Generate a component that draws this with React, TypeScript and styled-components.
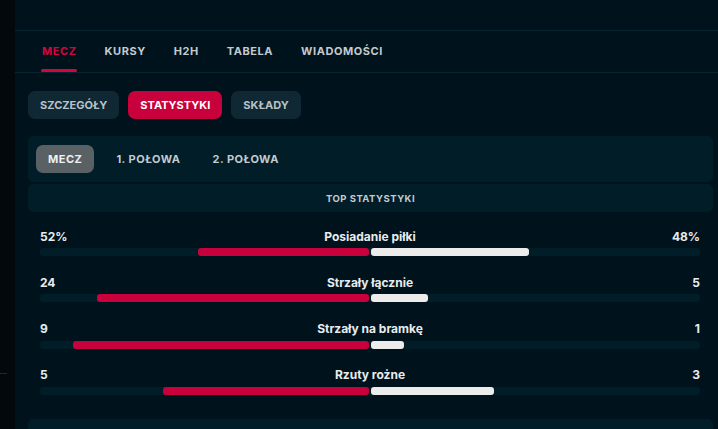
import React from "react";
import styled, { createGlobalStyle } from "styled-components";

const Global = createGlobalStyle`
  html, body { margin: 0; padding: 0; background: #00131c; }
  body { font-family: Inter, "Noto Sans", "Liberation Sans", sans-serif; overflow: hidden; }
  * { box-sizing: border-box; }
`;

const Page = styled.div`
  display: flex;
  width: 718px;
  height: 429px;
  overflow: hidden;
  background: #00131c;
`;

const Sidebar = styled.div`
  position: relative;
  width: 15px;
  flex: 0 0 15px;
  background: #02080b;
`;

const SideMark = styled.div`
  position: absolute;
  left: 0;
  top: 373px;
  width: 7px;
  height: 1px;
  background: #1a2a32;
`;

const Main = styled.div`
  flex: 1;
  display: flex;
  flex-direction: column;
  min-width: 0;
`;

const TopBar = styled.div`
  height: 31px;
  flex: 0 0 31px;
  border-bottom: 1px solid #0a2330;
`;

const Tabs = styled.nav`
  display: flex;
  align-items: stretch;
  gap: 28px;
  height: 42px;
  flex: 0 0 42px;
  padding-left: 27px;
  border-bottom: 1px solid #0a2330;
`;

const Tab = styled.div<{ $active?: boolean }>`
  position: relative;
  display: flex;
  align-items: center;
  padding-bottom: 2px;
  font-size: 11px;
  font-weight: 700;
  letter-spacing: 0.55px;
  color: ${(p) => (p.$active ? "#d3053f" : "#c3cbcf")};
  &::after {
    content: "";
    display: ${(p) => (p.$active ? "block" : "none")};
    position: absolute;
    left: -1px;
    right: 0;
    bottom: 0;
    height: 3px;
    border-radius: 2px;
    background: #d3053f;
  }
`;

const Pills = styled.div`
  display: flex;
  gap: 9px;
  padding: 18px 0 0 13px;
`;

const Pill = styled.div<{ $active?: boolean }>`
  height: 28px;
  display: flex;
  align-items: center;
  padding: 0 12px;
  border-radius: 7px;
  font-size: 11px;
  font-weight: 700;
  letter-spacing: 0;
  background: ${(p) => (p.$active ? "#c8003b" : "#0f2833")};
  color: ${(p) => (p.$active ? "#ffffff" : "#b9c2c7")};
`;

const Panel = styled.div`
  margin: 17px 5px 0 13px;
  display: flex;
  flex-direction: column;
  gap: 2px;
`;

const Segmented = styled.div`
  height: 46px;
  display: flex;
  align-items: center;
  padding: 0 8px;
  background: #011d28;
  border-radius: 5px;
`;

const Seg = styled.div<{ $active?: boolean }>`
  height: 28px;
  display: flex;
  align-items: center;
  padding: 0 ${(p) => (p.$active ? "12px" : "16px")};
  margin-right: ${(p) => (p.$active ? "6px" : "0")};
  border-radius: 7px;
  font-size: 11px;
  font-weight: 700;
  letter-spacing: 0.5px;
  background: ${(p) => (p.$active ? "#5a6165" : "transparent")};
  color: ${(p) => (p.$active ? "#eef1f2" : "#c3cbcf")};
`;

const SectionHead = styled.div`
  height: 28px;
  display: flex;
  align-items: center;
  justify-content: center;
  background: #011d28;
  border-radius: 5px;
  font-size: 9.5px;
  font-weight: 700;
  letter-spacing: 0.5px;
  color: #c3cbcf;
`;

const StatList = styled.div`
  display: flex;
  flex-direction: column;
  gap: 18.3px;
  padding: 14px 13px 0 12px;
  margin-bottom: 22px;
`;

const StatRow = styled.div`
  display: flex;
  flex-direction: column;
  gap: 4px;
`;

const StatLabels = styled.div`
  display: grid;
  grid-template-columns: 1fr auto 1fr;
  align-items: center;
  height: 16px;
  font-size: 12px;
  font-weight: 700;
  color: #e8ecee;
`;

const Right = styled.span`
  text-align: right;
`;

const Track = styled.div`
  display: flex;
  height: 8px;
  gap: 2px;
  background: #011d28;
  border-radius: 3px;
`;

const Half = styled.div<{ $side: "left" | "right" }>`
  flex: 1;
  display: flex;
  justify-content: ${(p) => (p.$side === "left" ? "flex-end" : "flex-start")};
`;

const Fill = styled.div<{ $side: "left" | "right" }>`
  height: 100%;
  border-radius: 3px;
  background: ${(p) => (p.$side === "left" ? "#c8003b" : "#ececec")};
`;

const stats = [
  { l: "52%", r: "48%", name: "Posiadanie piłki", a: 52, b: 48 },
  { l: "24", r: "5", name: "Strzały łącznie", a: 24, b: 5 },
  { l: "9", r: "1", name: "Strzały na bramkę", a: 9, b: 1 },
  { l: "5", r: "3", name: "Rzuty rożne", a: 5, b: 3 },
];

export default function App() {
  return (
    <>
      <Global />
      <Page>
        <Sidebar>
          <SideMark />
        </Sidebar>
        <Main>
          <TopBar />
          <Tabs>
            <Tab $active>MECZ</Tab>
            <Tab>KURSY</Tab>
            <Tab>H2H</Tab>
            <Tab>TABELA</Tab>
            <Tab>WIADOMOŚCI</Tab>
          </Tabs>
          <Pills>
            <Pill>SZCZEGÓŁY</Pill>
            <Pill $active>STATYSTYKI</Pill>
            <Pill>SKŁADY</Pill>
          </Pills>
          <Panel>
            <Segmented>
              <Seg $active>MECZ</Seg>
              <Seg>1. POŁOWA</Seg>
              <Seg>2. POŁOWA</Seg>
            </Segmented>
            <SectionHead>TOP STATYSTYKI</SectionHead>
            <StatList>
              {stats.map((s) => {
                const t = s.a + s.b;
                return (
                  <StatRow key={s.name}>
                    <StatLabels>
                      <span>{s.l}</span>
                      <span>{s.name}</span>
                      <Right>{s.r}</Right>
                    </StatLabels>
                    <Track>
                      <Half $side="left">
                        <Fill $side="left" style={{ width: `${(s.a / t) * 100}%` }} />
                      </Half>
                      <Half $side="right">
                        <Fill $side="right" style={{ width: `${(s.b / t) * 100}%` }} />
                      </Half>
                    </Track>
                  </StatRow>
                );
              })}
            </StatList>
            <SectionHead>STRZAŁY</SectionHead>
          </Panel>
        </Main>
      </Page>
    </>
  );
}
